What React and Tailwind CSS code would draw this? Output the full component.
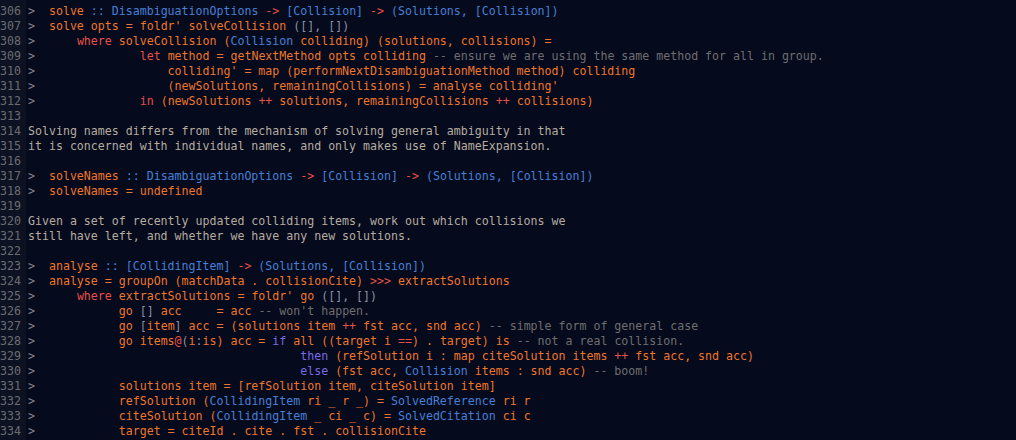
const C = {
  o: 'text-[#ef772c]',
  b: 'text-[#4780d6]',
  r: 'text-[#e8504a]',
  p: 'text-[#7b6be4]',
  c: 'text-[#6e6e70]',
  g: 'text-[#8a93a6]',
};

const sp = (n) => ' '.repeat(n);

// each entry: [lineNumber, kind, segments]
// kind: 'code' (bird track), 'text' (prose), 'blank'
const lines = [
  [306, 'code', [['o', 'solve '], ['b', ':: DisambiguationOptions '], ['r', '->'], ['b', ' [Collision] '], ['r', '->'], ['b', ' (Solutions, [Collision])']]],
  [307, 'code', [['o', "solve opts = foldr' solveCollision "], ['g', '([], [])']]],
  [308, 'code', [['o', sp(4)], ['r', 'where'], ['o', ' solveCollision ('], ['b', 'Collision'], ['o', ' colliding) (solutions, collisions) =']]],
  [309, 'code', [['o', sp(13)], ['r', 'let'], ['o', ' method = getNextMethod opts colliding '], ['c', '-- ensure we are using the same method for all in group.']]],
  [310, 'code', [['o', sp(17) + "colliding' = map (performNextDisambiguationMethod method) colliding"]]],
  [311, 'code', [['o', sp(17) + "(newSolutions, remainingCollisions) = analyse colliding'"]]],
  [312, 'code', [['o', sp(13)], ['r', 'in'], ['o', ' (newSolutions '], ['r', '++'], ['o', ' solutions, remainingCollisions '], ['r', '++'], ['o', ' collisions)']]],
  [313, 'blank'],
  [314, 'text', 'Solving names differs from the mechanism of solving general ambiguity in that'],
  [315, 'text', 'it is concerned with individual names, and only makes use of NameExpansion.'],
  [316, 'blank'],
  [317, 'code', [['o', 'solveNames '], ['b', ':: DisambiguationOptions '], ['r', '->'], ['b', ' [Collision] '], ['r', '->'], ['b', ' (Solutions, [Collision])']]],
  [318, 'code', [['o', 'solveNames = undefined']]],
  [319, 'blank'],
  [320, 'text', 'Given a set of recently updated colliding items, work out which collisions we'],
  [321, 'text', 'still have left, and whether we have any new solutions.'],
  [322, 'blank'],
  [323, 'code', [['o', 'analyse '], ['b', ':: [CollidingItem] '], ['r', '->'], ['b', ' (Solutions, [Collision])']]],
  [324, 'code', [['o', 'analyse = groupOn (matchData . collisionCite) '], ['r', '>>>'], ['o', ' extractSolutions']]],
  [325, 'code', [['o', sp(4)], ['r', 'where'], ['o', " extractSolutions = foldr' go "], ['g', '([], [])']]],
  [326, 'code', [['o', sp(10) + 'go '], ['g', '[]'], ['o', ' acc     = acc '], ['c', "-- won't happen."]]],
  [327, 'code', [['o', sp(10) + 'go '], ['g', '['], ['o', 'item'], ['g', ']'], ['o', ' acc = (solutions item '], ['r', '++'], ['o', ' fst acc, snd acc) '], ['c', '-- simple form of general case']]],
  [328, 'code', [['o', sp(10) + 'go items'], ['r', '@'], ['g', '('], ['o', 'i'], ['g', ':'], ['o', 'is) acc = '], ['p', 'if'], ['o', ' all ((target i '], ['r', '=='], ['o', ') . target) is '], ['c', '-- not a real collision.']]],
  [329, 'code', [['o', sp(36)], ['p', 'then'], ['o', ' (refSolution i : map citeSolution items '], ['r', '++'], ['o', ' fst acc, snd acc)']]],
  [330, 'code', [['o', sp(36)], ['p', 'else'], ['o', ' (fst acc, '], ['b', 'Collision'], ['o', ' items : snd acc) '], ['c', '-- boom!']]],
  [331, 'code', [['o', sp(10) + 'solutions item = [refSolution item, citeSolution item]']]],
  [332, 'code', [['o', sp(10) + 'refSolution ('], ['b', 'CollidingItem'], ['o', ' ri _ r _) = '], ['b', 'SolvedReference'], ['o', ' ri r']]],
  [333, 'code', [['o', sp(10) + 'citeSolution ('], ['b', 'CollidingItem'], ['o', ' _ ci _ c) = '], ['b', 'SolvedCitation'], ['o', ' ci c']]],
  [334, 'code', [['o', sp(10) + 'target = citeId . cite . fst . collisionCite']]],
];

function Line({ kind, body }) {
  if (kind === 'blank') return <div className="h-[15px]" />;
  if (kind === 'text') return <div className="h-[15px] text-[#b6aca0]">{body}</div>;
  return (
    <div className="h-[15px]">
      <span className="text-[#83848f]">{'>  '}</span>
      {body.map(([k, t], i) => (
        <span key={i} className={C[k]}>{t}</span>
      ))}
    </div>
  );
}

export default function App() {
  return (
    <div
      className="flex h-[440px] w-[1016px] overflow-hidden bg-[#050a1c] text-[11.6px] leading-[15px] whitespace-pre"
      style={{ fontFamily: '"DejaVu Sans Mono", "Liberation Mono", monospace' }}
    >
      <div className="w-[26px] shrink-0 bg-[#0d1223] pt-[4px] pr-[6px] text-right text-[#6b6c72]">
        {lines.map(([n]) => (
          <div key={n} className="h-[15px]">{n}</div>
        ))}
      </div>
      <div className="flex-1 pt-[4px] pl-[2px]">
        {lines.map(([n, kind, body]) => (
          <Line key={n} kind={kind} body={body} />
        ))}
      </div>
    </div>
  );
}
